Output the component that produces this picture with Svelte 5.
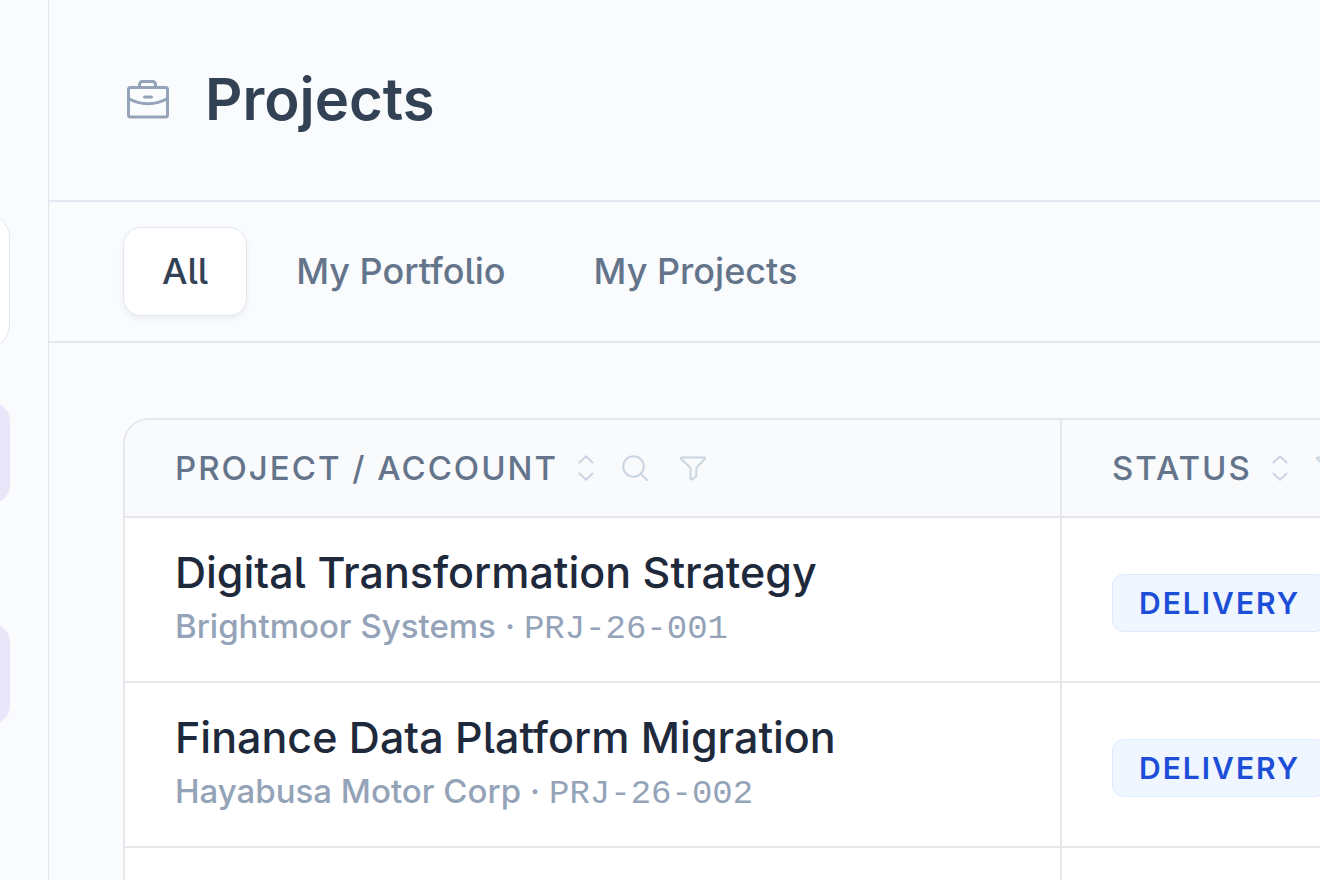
<script lang="ts">
  type Project = { name: string; account: string; code: string; status: string };

  const tabs = ["All", "My Portfolio", "My Projects"];
  let activeTab = $state("All");

  const projects: Project[] = [
    {
      name: "Digital Transformation Strategy",
      account: "Brightmoor Systems",
      code: "PRJ-26-001",
      status: "Delivery",
    },
    {
      name: "Finance Data Platform Migration",
      account: "Hayabusa Motor Corp",
      code: "PRJ-26-002",
      status: "Delivery",
    },
  ];
</script>

{#snippet sortIcon()}
  <svg class="icon sort-icon" viewBox="0 0 16 26" aria-hidden="true">
    <path d="M1.5 7.5 8 1.2l6.5 6.3M1.5 18.5 8 24.8l6.5-6.3" />
  </svg>
{/snippet}

{#snippet filterIcon()}
  <svg class="icon filter-icon" viewBox="0 0 26 26" aria-hidden="true">
    <path
      d="M1.6 2.5h22.8c.8 0 1 .8.5 1.400L17 12.300c-.5.6-.7 1-.7 1.700v6.500c0 .6-.2 1-.7 1.300l-3.500 2.500c-.9.6-1.600.2-1.600-.7V14c0-.7-.2-1.100-.7-1.700L1.100 3.900c-.5-.6-.3-1.400.5-1.400Z"
    />
  </svg>
{/snippet}

<div class="shell">
  <aside class="sidebar">
    <div class="workspace"></div>
    <div class="nav-item"></div>
    <div class="nav-item"></div>
  </aside>

  <main class="content">
    <header class="page-header">
      <svg class="briefcase" viewBox="0 0 42 40" aria-hidden="true">
        <rect x="1.5" y="8.5" width="39" height="29.5" rx="2" />
        <path d="M12.5 8.5V5.500a3 3 0 0 1 3-3h10a3 3 0 0 1 3 3v3" />
        <path d="M1.5 19.500c12 7 27 7 39 0M17.500 18h7" />
      </svg>
      <h1>Projects</h1>
    </header>

    <nav class="tabs">
      {#each tabs as tab (tab)}
        <button class="tab" class:active={tab === activeTab} onclick={() => (activeTab = tab)}>
          {tab}
        </button>
      {/each}
    </nav>

    <div class="table-area">
      <div class="table-card">
        <table>
          <colgroup>
            <col class="col-project" />
            <col />
          </colgroup>
          <thead>
            <tr>
              <th>
                <div class="head">
                  <span>Project / Account</span>
                  <button class="head-button" aria-label="Sort by project">{@render sortIcon()}</button>
                  <button class="head-button search" aria-label="Search projects">
                    <svg class="icon search-icon" viewBox="0 0 26 26" aria-hidden="true">
                      <circle cx="11.5" cy="11.5" r="10.3" />
                      <path d="m19 19 6 6" />
                    </svg>
                  </button>
                  <button class="head-button filter" aria-label="Filter projects">
                    {@render filterIcon()}
                  </button>
                </div>
              </th>
              <th>
                <div class="head">
                  <span>Status</span>
                  <button class="head-button" aria-label="Sort by status">{@render sortIcon()}</button>
                  <button class="head-button search" aria-label="Filter status">
                    {@render filterIcon()}
                  </button>
                </div>
              </th>
            </tr>
          </thead>
          <tbody>
            {#each projects as project (project.code)}
              <tr>
                <td>
                  <div class="name">{project.name}</div>
                  <div class="meta">
                    <span>{project.account}</span>
                    <span>·</span>
                    <span class="code">{project.code}</span>
                  </div>
                </td>
                <td><span class="badge">{project.status}</span></td>
              </tr>
            {/each}
            <tr>
              <td></td>
              <td></td>
            </tr>
          </tbody>
        </table>
      </div>
    </div>
  </main>
</div>

<style>
  :global(body) {
    background: #f9fbfd;
  }

  .shell {
    display: flex;
    height: 100vh;
    overflow: hidden;
    font-family: Inter, "Liberation Sans", sans-serif;
    font-feature-settings: "cv05";
    font-weight: 500;
    color: #1e293b;
  }

  /* Sidebar */
  .sidebar {
    flex: 0 0 48px;
    border-right: 1px solid #dfe4ea;
    padding-top: 212px;
    overflow: hidden;
  }

  .workspace {
    height: 136px;
    margin: 0 38px 53px -60px;
    background: #ffffff;
    border: 1px solid #e2e8f0;
    border-radius: 26px;
  }

  .nav-item {
    height: 100px;
    margin: 0 38px 121px -60px;
    background: #e9e6f9;
    border-radius: 18px;
  }

  .content {
    flex: 1;
    min-width: 0;
    overflow: hidden;
  }

  /* Page header */
  .page-header {
    display: flex;
    align-items: center;
    gap: 36px;
    height: 200px;
    padding: 0 78px 2px;
    box-sizing: border-box;
  }

  .briefcase {
    width: 42px;
    height: 40px;
    fill: none;
    stroke: #94a3b8;
    stroke-width: 3;
    stroke-linecap: round;
    stroke-linejoin: round;
  }

  h1 {
    margin: 0;
    font-size: 58px;
    line-height: 64px;
    font-weight: 600;
    color: #334155;
  }

  /* Tabs */
  .tabs {
    display: flex;
    gap: 10px;
    padding: 25px 74px;
    border-top: 2px solid #e2e8f0;
    border-bottom: 2px solid #e2e8f0;
  }

  .tab {
    height: 89px;
    padding: 0 38px 2px;
    border: 1px solid transparent;
    border-radius: 18px;
    background: none;
    font: inherit;
    font-feature-settings: inherit;
    font-size: 36px;
    color: #64748b;
    white-space: nowrap;
    cursor: pointer;
  }

  .tab.active {
    background: #ffffff;
    border-color: #e2e8f0;
    box-shadow: 0 3px 6px rgba(15, 23, 42, 0.06);
    color: #334155;
  }

  /* Table */
  .table-area {
    padding: 75px 0 0 74px;
  }

  .table-card {
    width: 1500px;
    border: 2px solid #e5e7eb;
    border-radius: 26px;
    background: #ffffff;
    overflow: hidden;
  }

  table {
    width: 100%;
    table-layout: fixed;
    border-collapse: separate;
    border-spacing: 0;
    text-align: left;
  }

  .col-project {
    width: 937px;
  }

  th,
  td {
    box-sizing: border-box;
    padding: 0 50px;
    border-right: 2px solid #e5e7eb;
    border-bottom: 2px solid #e5e7eb;
  }

  th {
    height: 98px;
    background: #f9fafc;
    font-size: 33px;
    font-weight: 500;
    letter-spacing: 2px;
    text-transform: uppercase;
    color: #64748b;
  }

  td {
    height: 165px;
  }

  .head {
    display: flex;
    align-items: center;
    white-space: nowrap;
  }

  .head-button {
    display: flex;
    margin: 0 0 0 20px;
    padding: 0;
    border: 0;
    background: none;
    cursor: pointer;
  }

  .head-button.search {
    margin-left: 28px;
  }

  .head-button.filter {
    margin-left: 32px;
  }

  .icon {
    fill: none;
    stroke: #cbd5e1;
    stroke-width: 2;
    stroke-linecap: round;
    stroke-linejoin: round;
  }

  .sort-icon {
    width: 16px;
    height: 26px;
  }

  .search-icon,
  .filter-icon {
    width: 26px;
    height: 26px;
  }

  .name {
    font-size: 43px;
    line-height: 56px;
    white-space: nowrap;
  }

  .meta {
    display: flex;
    align-items: baseline;
    gap: 9px;
    font-size: 33px;
    line-height: 52px;
    color: #94a3b8;
    white-space: nowrap;
  }

  .code {
    font-family: "Liberation Mono", monospace;
    font-size: 34px;
    font-weight: 400;
  }

  .badge {
    display: inline-block;
    padding: 0 26px;
    margin-top: 6px;
    border: 1px solid #dbeafe;
    border-radius: 12px;
    background: #eff6ff;
    font-size: 30px;
    line-height: 56px;
    font-weight: 600;
    letter-spacing: 2px;
    text-transform: uppercase;
    color: #1d4ed8;
  }
</style>
